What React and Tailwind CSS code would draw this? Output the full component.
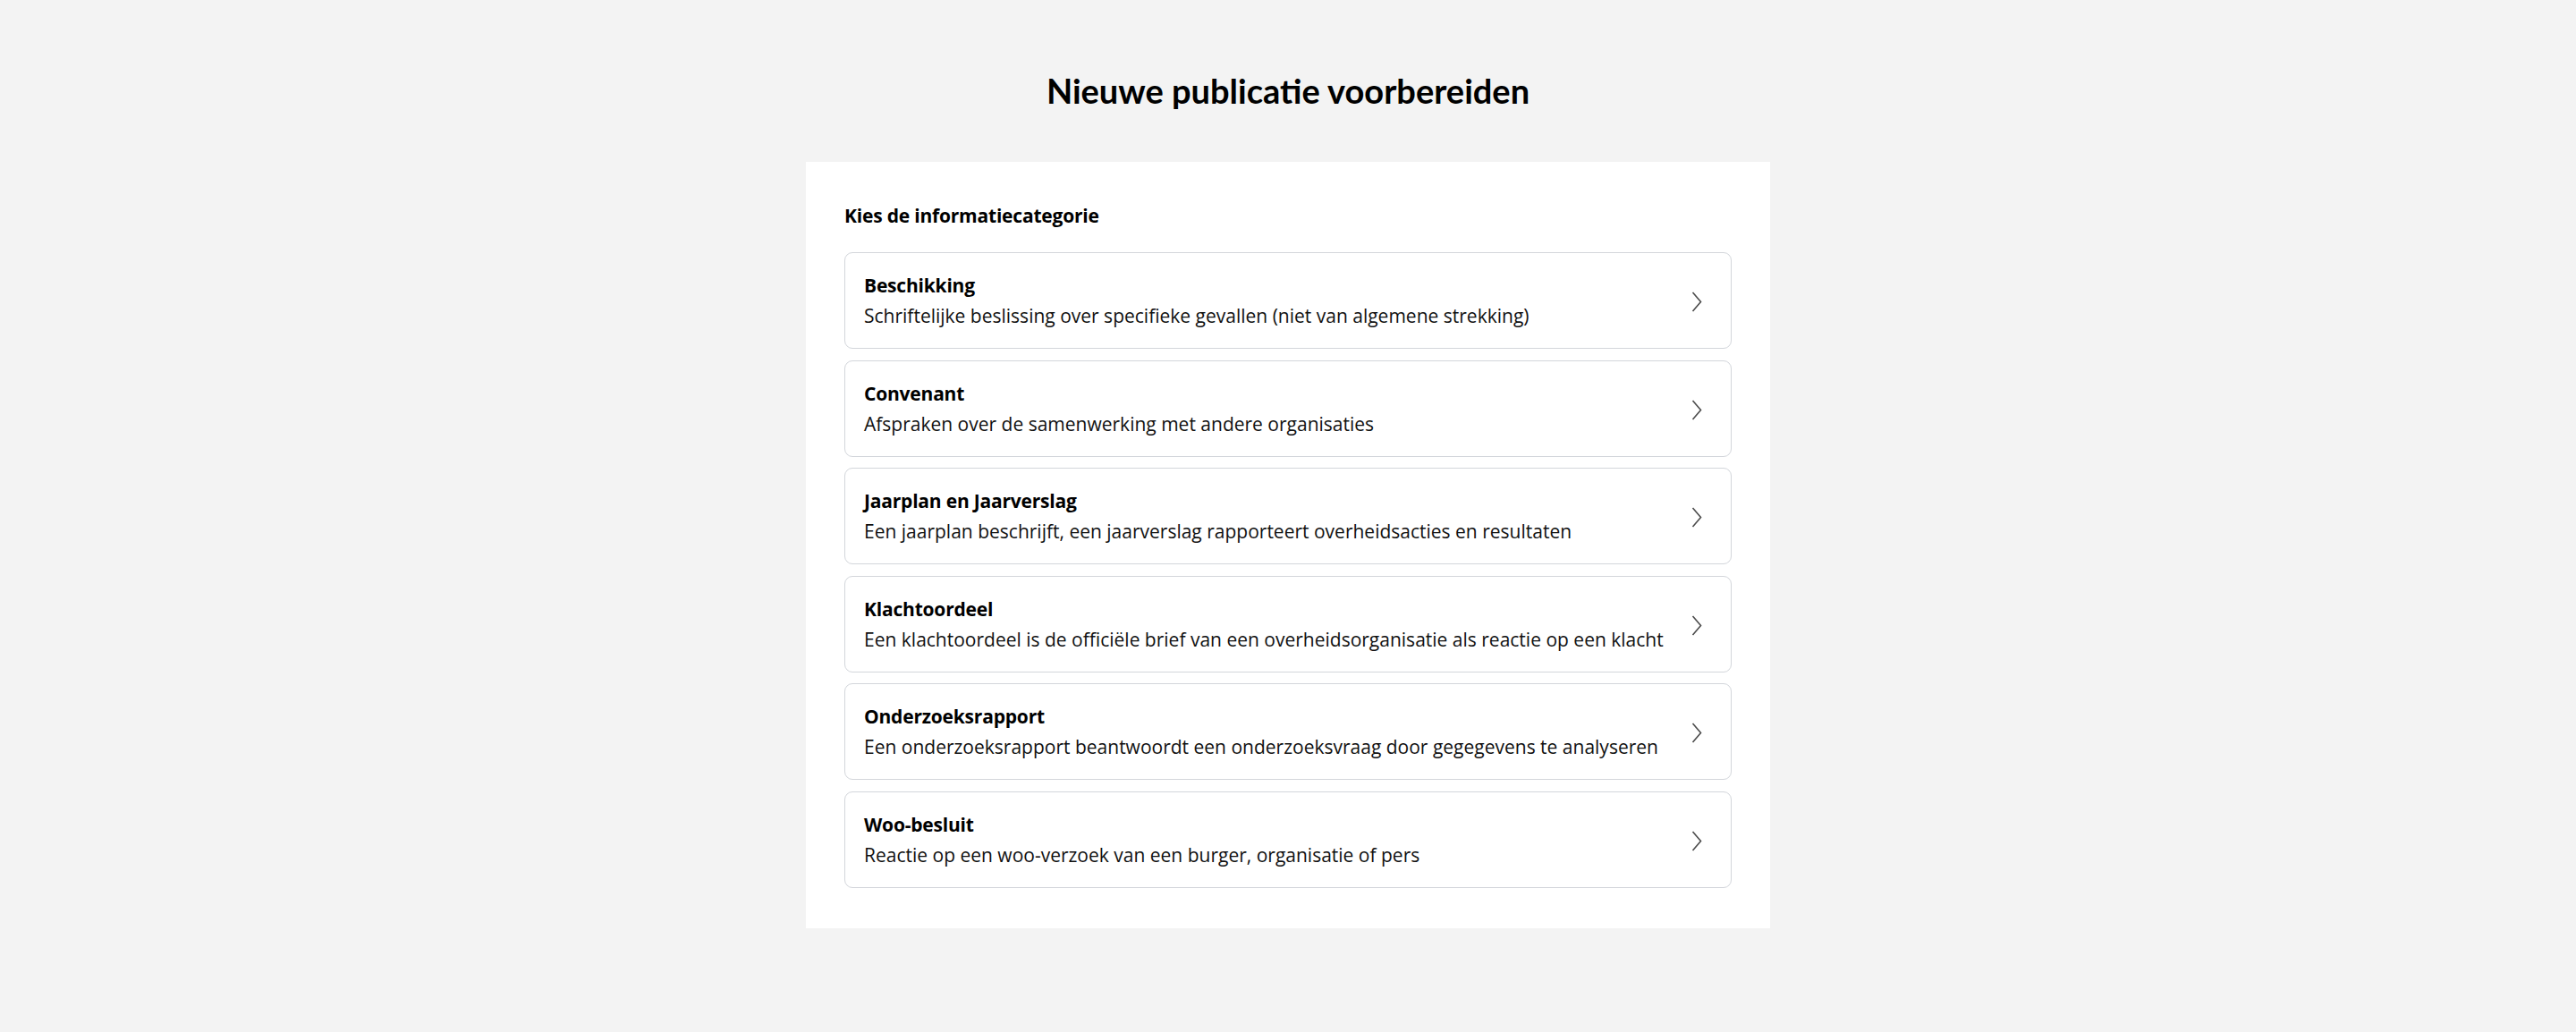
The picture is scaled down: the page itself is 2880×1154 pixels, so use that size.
import React from "react";

const items = [
  ["Beschikking", "Schriftelijke beslissing over specifieke gevallen (niet van algemene strekking)"],
  ["Convenant", "Afspraken over de samenwerking met andere organisaties"],
  ["Jaarplan en Jaarverslag", "Een jaarplan beschrijft, een jaarverslag rapporteert overheidsacties en resultaten"],
  ["Klachtoordeel", "Een klachtoordeel is de officiële brief van een overheidsorganisatie als reactie op een klacht"],
  ["Onderzoeksrapport", "Een onderzoeksrapport beantwoordt een onderzoeksvraag door gegegevens te analyseren"],
  ["Woo-besluit", "Reactie op een woo-verzoek van een burger, organisatie of pers"],
];

function Chevron() {
  return (
    <svg width="12" height="23" viewBox="0 0 12 23" fill="none" className="shrink-0 mt-[3px]">
      <polyline points="1.5,1 10.5,11.5 1.5,22" stroke="#4b4b4b" strokeWidth="1.6" strokeLinejoin="miter" />
    </svg>
  );
}

export default function App() {
  return (
    <div
      className="min-h-[1154px] w-full bg-[#f3f3f3] text-black flex flex-col items-center"
      style={{ fontFamily: "'Open Sans', 'Noto Sans', sans-serif" }}
    >
      <h1
        className="mt-[78px] text-[38px] leading-[46px] font-bold tracking-[0px]"
        style={{ fontFamily: "Lato, 'Open Sans', sans-serif" }}
      >
        Nieuwe publicatie voorbereiden
      </h1>
      <div className="mt-[57px] w-[1078px] bg-white px-[43px] pt-[45px] pb-[45px]">
        <h2 className="text-[21px] leading-[30px] font-bold tracking-[-0.2px]">
          Kies de informatiecategorie
        </h2>
        <div className="mt-[26px] flex flex-col gap-[12.5px]">
          {items.map(([t, d]) => (
            <button
              key={t}
              className="flex items-center justify-between rounded-[9px] border border-[#d3d6db] bg-white pl-[21px] pr-[32px] pt-[19px] pb-[19px] text-left"
            >
              <div className="flex flex-col">
                <span className="text-[21px] leading-[34px] font-bold text-black tracking-[-0.2px]">{t}</span>
                <span className="text-[21px] leading-[34px] text-[#111]">{d}</span>
              </div>
              <Chevron />
            </button>
          ))}
        </div>
      </div>
    </div>
  );
}
